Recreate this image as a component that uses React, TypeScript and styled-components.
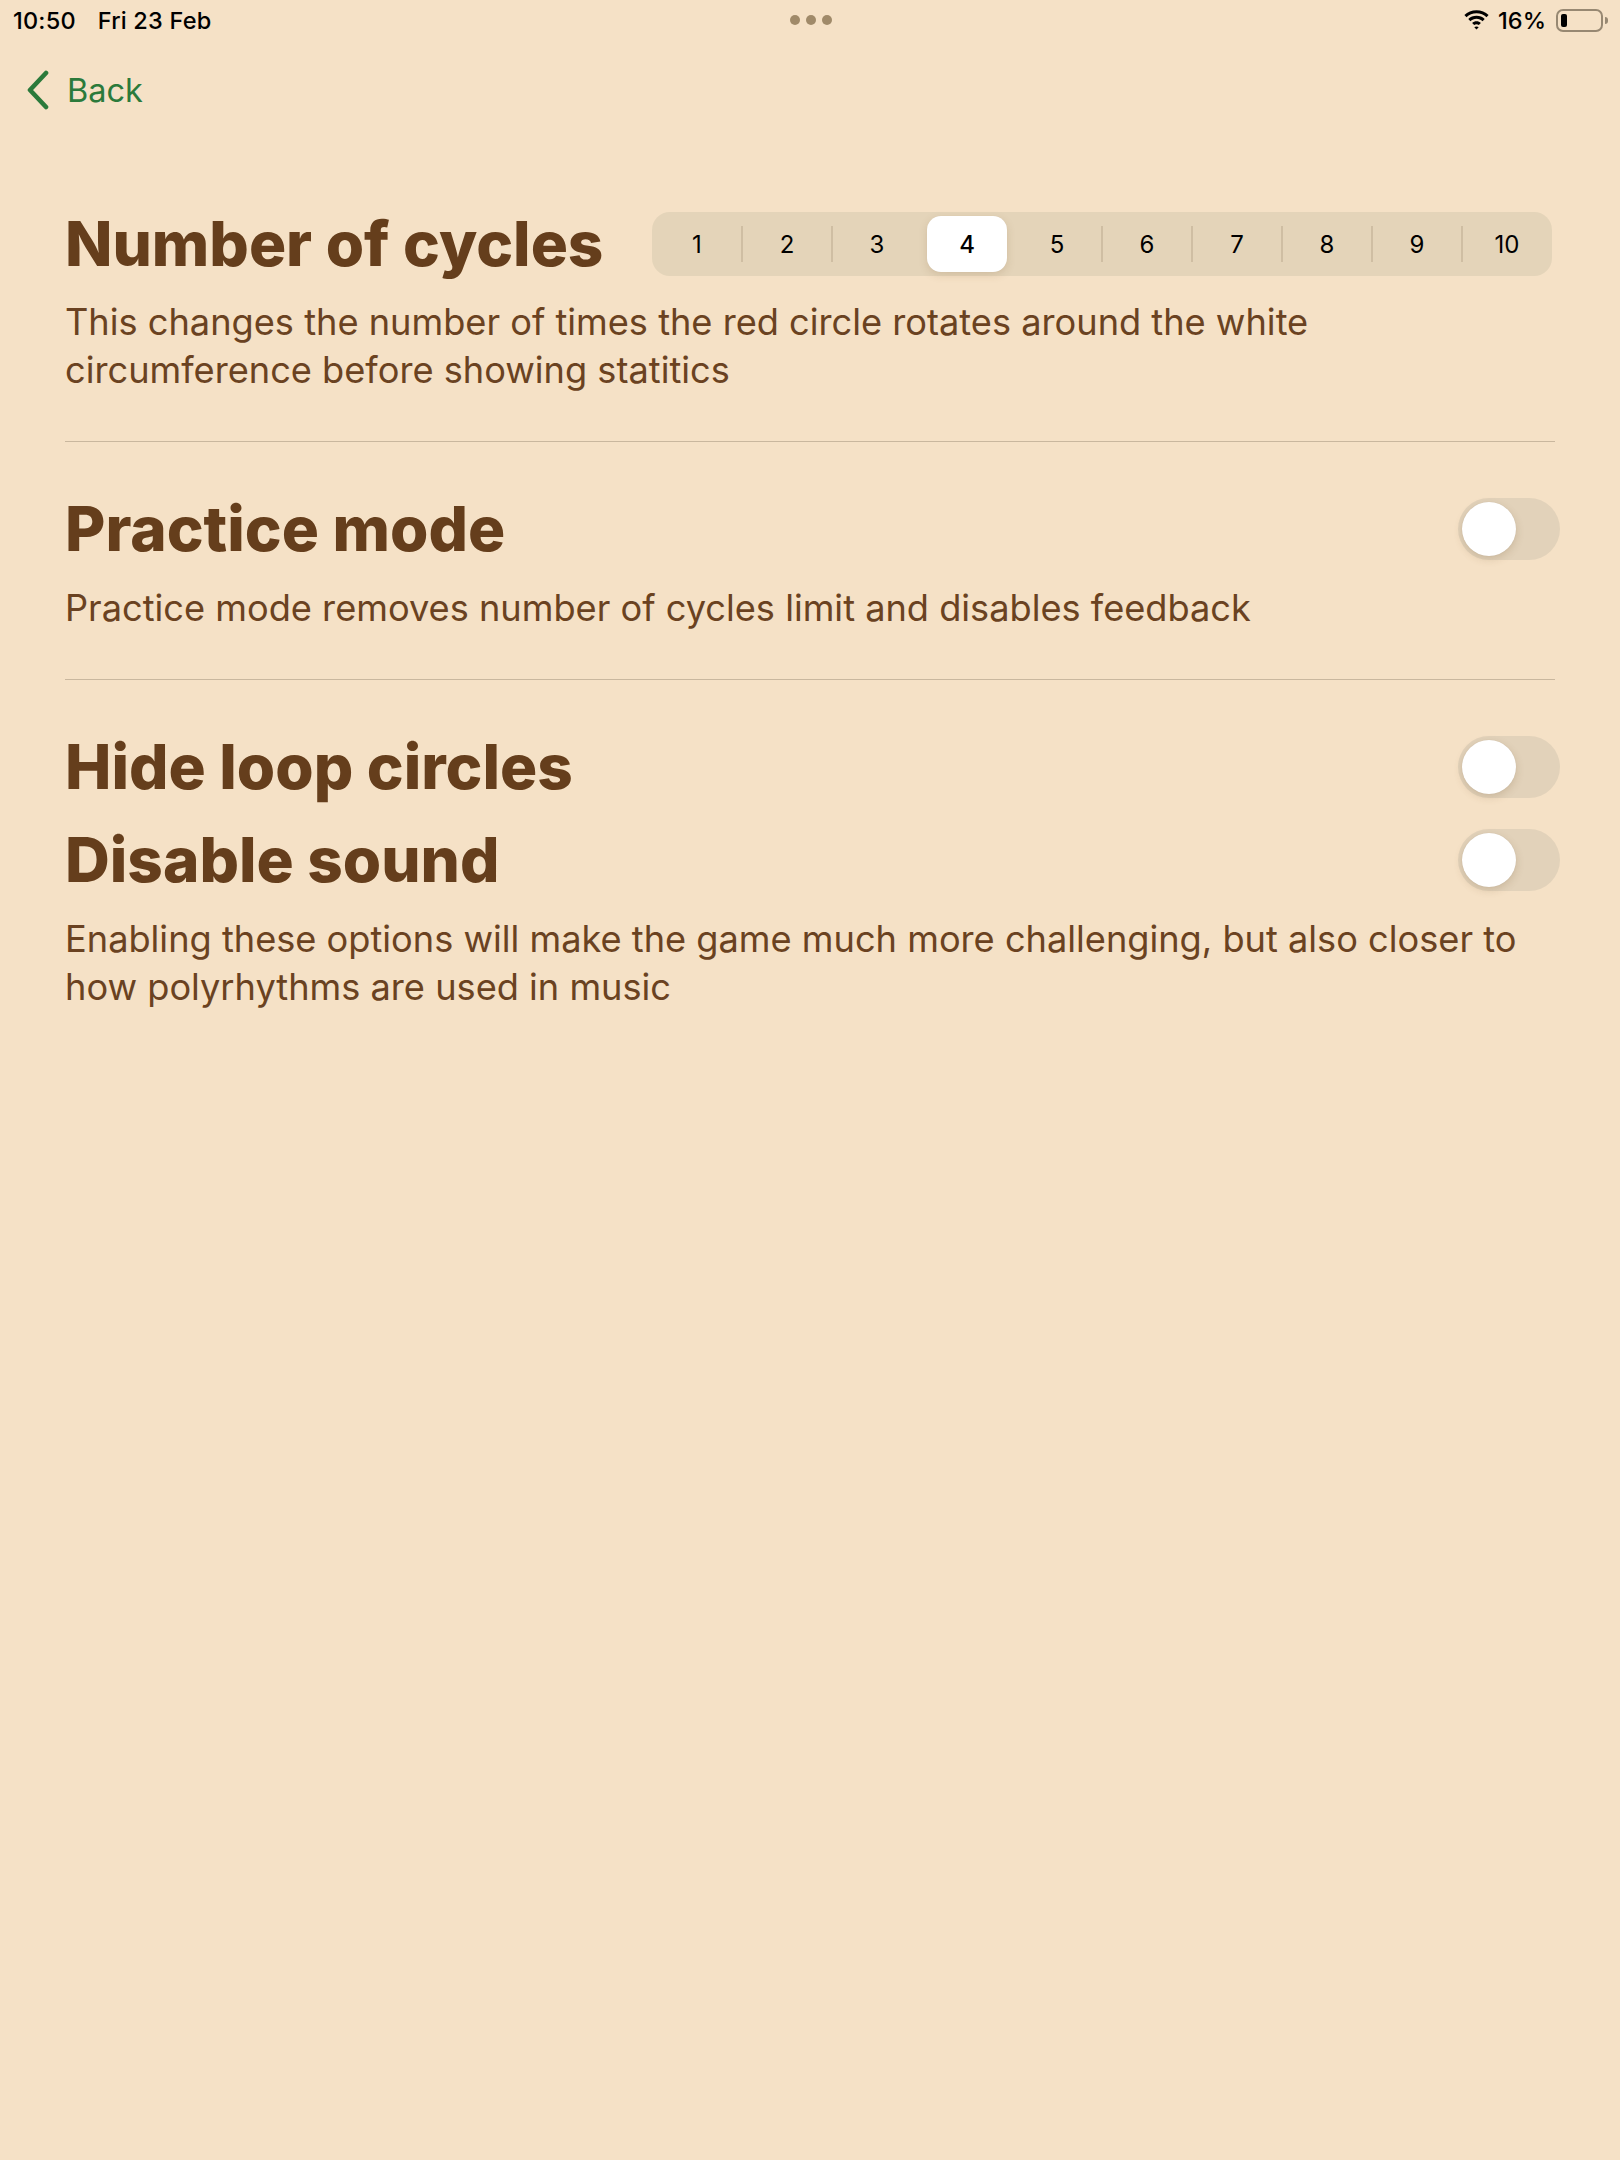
import React, { useState } from "react";
import styled, { createGlobalStyle } from "styled-components";

const Global = createGlobalStyle`
  html, body { margin: 0; padding: 0; background: #F5E1C6; }
  body { font-family: Inter, "Noto Sans", sans-serif; -webkit-font-smoothing: antialiased; }
  #root { min-height: 2160px; background: #F5E1C6; }
`;

const Page = styled.div`
  width: 1620px;
  min-height: 2160px;
  background: #F5E1C6;
  display: flex;
  flex-direction: column;
`;

const StatusBar = styled.div`
  height: 40px;
  display: grid;
  grid-template-columns: 1fr auto 1fr;
  align-items: center;
  padding: 0 11px 0 13px;
  font-size: 23.5px;
  font-weight: 500;
  color: #000;
`;

const StatusLeft = styled.div`
  display: flex;
  gap: 22px;
  letter-spacing: 0.2px;
`;

const Dots = styled.div`
  display: flex;
  gap: 6px;
`;

const Dot = styled.span`
  width: 10px;
  height: 10px;
  border-radius: 50%;
  background: #A08A69;
`;

const StatusRight = styled.div`
  display: flex;
  justify-content: flex-end;
  align-items: center;
  gap: 8px;
`;

const Battery = styled.div`
  position: relative;
  width: 47px;
  height: 23px;
  box-sizing: border-box;
  border: 2px solid #978872;
  border-radius: 7px;
  padding: 3px;
  margin-left: 2px;
  margin-right: 6px;
  &::after {
    content: "";
    position: absolute;
    right: -7px;
    top: 6px;
    width: 3px;
    height: 7px;
    border-radius: 0 3px 3px 0;
    background: #978872;
  }
`;

const BatteryLevel = styled.div`
  height: 100%;
  border-radius: 2px;
  background: #000;
`;

const NavBar = styled.div`
  height: 116px;
  display: flex;
  align-items: flex-start;
  padding: 30px 0 0 26px;
  box-sizing: border-box;
`;

const BackButton = styled.button`
  display: flex;
  align-items: center;
  gap: 17px;
  background: none;
  border: none;
  padding: 0;
  color: #2B7A3B;
  font-family: Inter, sans-serif;
  font-size: 32.5px;
  font-weight: 400;
  cursor: pointer;
`;

const Content = styled.div`
  padding: 0 65px;
`;

const Section = styled.section<{ $last?: boolean }>`
  padding: 56px 0 ${(p) => (p.$last ? "0" : "47px")};
  border-bottom: ${(p) => (p.$last ? "none" : "1px solid #C9B79E")};
  display: flex;
  flex-direction: column;
`;

const Row = styled.div<{ $gapAfter?: number }>`
  display: flex;
  align-items: center;
  justify-content: space-between;
  margin-bottom: ${(p) => p.$gapAfter ?? 0}px;
`;

const Heading = styled.h2`
  margin: 0;
  font-family: Inter, sans-serif;
  font-size: 62px;
  line-height: 62px;
  font-weight: 800;
  letter-spacing: 0;
  color: #653E1C;
`;

const Description = styled.p`
  margin: 0;
  font-family: Inter, sans-serif;
  font-size: 36.2px;
  line-height: 48px;
  font-weight: 400;
  color: #6A4221;
  max-width: 1490px;
`;

const Segmented = styled.div`
  width: 900px;
  height: 64px;
  box-sizing: border-box;
  padding: 4px 0;
  margin-right: 3px;
  border-radius: 18px;
  background: #E4D4B9;
  display: grid;
  grid-template-columns: repeat(10, 1fr);
`;

const Segment = styled.button<{ $selected: boolean; $divider: boolean }>`
  position: relative;
  border: none;
  background: transparent;
  padding: 0;
  font-family: Inter, sans-serif;
  font-size: 24px;
  font-weight: ${(p) => (p.$selected ? 500 : 400)};
  color: #000;
  display: flex;
  align-items: center;
  justify-content: center;
  cursor: pointer;
  &::before {
    content: "";
    position: absolute;
    left: 5px;
    right: 5px;
    top: 0;
    bottom: 0;
    border-radius: 14px;
    background: ${(p) => (p.$selected ? "#fff" : "transparent")};
    box-shadow: ${(p) => (p.$selected ? "0 3px 8px rgba(120, 90, 50, 0.18), 0 0 1px rgba(0,0,0,0.05)" : "none")};
  }
  &::after {
    content: "";
    position: absolute;
    left: -1px;
    top: 10px;
    bottom: 10px;
    width: 2px;
    background: ${(p) => (p.$divider ? "#CFBEA3" : "transparent")};
  }
  span { position: relative; }
`;

const Track = styled.button<{ $on: boolean }>`
  position: relative;
  width: 102px;
  height: 62px;
  border-radius: 31px;
  border: none;
  padding: 0;
  margin-right: -5px;
  background: ${(p) => (p.$on ? "#34C759" : "#E2D2BA")};
  cursor: pointer;
  flex-shrink: 0;
`;

const Knob = styled.span<{ $on: boolean }>`
  position: absolute;
  top: 4px;
  left: ${(p) => (p.$on ? "44px" : "4px")};
  width: 54px;
  height: 54px;
  border-radius: 50%;
  background: #fff;
  box-shadow: 0 3px 8px rgba(110, 80, 40, 0.2), 0 0 1px rgba(0, 0, 0, 0.1);
  transition: left 0.2s;
`;

function Toggle({ on, onChange }: { on: boolean; onChange: (v: boolean) => void }) {
  return (
    <Track $on={on} onClick={() => onChange(!on)}>
      <Knob $on={on} />
    </Track>
  );
}

const Wifi = () => (
  <svg width="27" height="20" viewBox="0 0 27 20">
    <path d="M13.5 3.2c3.9 0 7.4 1.5 10 4l2.1-2.2C22.5 2 18.2 0.2 13.5 0.2S4.5 2 1.4 5l2.1 2.2c2.6-2.5 6.1-4 10-4z" fill="#000" />
    <path d="M13.5 8.8c2.4 0 4.5 0.9 6.1 2.4l2.1-2.2c-2.1-2-5-3.2-8.2-3.2s-6.1 1.2-8.2 3.2l2.1 2.2c1.6-1.5 3.7-2.4 6.1-2.4z" fill="#000" />
    <path d="M13.5 14.2c0.9 0 1.7 0.3 2.3 0.9l2.1-2.2c-1.2-1.1-2.7-1.7-4.4-1.7s-3.2 0.6-4.4 1.7l2.1 2.2c0.6-0.6 1.4-0.9 2.3-0.9z" fill="#000" />
    <path d="M13.5 19.6l2.2-2.3c-0.6-0.5-1.3-0.8-2.2-0.8s-1.6 0.3-2.2 0.8z" fill="#000" />
  </svg>
);

const Chevron = () => (
  <svg width="24" height="40" viewBox="0 0 24 40">
    <path d="M20 3 L4 20 L20 37" fill="none" stroke="#2B7A3B" strokeWidth="4.6" strokeLinecap="round" strokeLinejoin="round" />
  </svg>
);

export default function App() {
  const [cycles, setCycles] = useState(4);
  const [practice, setPractice] = useState(false);
  const [hideLoops, setHideLoops] = useState(false);
  const [noSound, setNoSound] = useState(false);

  return (
    <Page>
      <Global />
      <StatusBar>
        <StatusLeft>
          <span>10:50</span>
          <span>Fri 23 Feb</span>
        </StatusLeft>
        <Dots>
          <Dot />
          <Dot />
          <Dot />
        </Dots>
        <StatusRight>
          <Wifi />
          <span>16%</span>
          <Battery>
            <BatteryLevel style={{ width: "16%" }} />
          </Battery>
        </StatusRight>
      </StatusBar>
      <NavBar>
        <BackButton>
          <Chevron />
          Back
        </BackButton>
      </NavBar>
      <Content>
        <Section>
          <Row $gapAfter={22}>
            <Heading>Number of cycles</Heading>
            <Segmented>
              {Array.from({ length: 10 }, (_, i) => i + 1).map((n) => (
                <Segment
                  key={n}
                  $selected={n === cycles}
                  $divider={n > 1 && n !== cycles && n - 1 !== cycles}
                  onClick={() => setCycles(n)}
                >
                  <span>{n}</span>
                </Segment>
              ))}
            </Segmented>
          </Row>
          <Description>
            This changes the number of times the red circle rotates around the white circumference before showing statitics
          </Description>
        </Section>
        <Section>
          <Row $gapAfter={24}>
            <Heading>Practice mode</Heading>
            <Toggle on={practice} onChange={setPractice} />
          </Row>
          <Description>Practice mode removes number of cycles limit and disables feedback</Description>
        </Section>
        <Section $last>
          <Row $gapAfter={31}>
            <Heading>Hide loop circles</Heading>
            <Toggle on={hideLoops} onChange={setHideLoops} />
          </Row>
          <Row $gapAfter={24}>
            <Heading>Disable sound</Heading>
            <Toggle on={noSound} onChange={setNoSound} />
          </Row>
          <Description>
            Enabling these options will make the game much more challenging, but also closer to how polyrhythms are used in music
          </Description>
        </Section>
      </Content>
    </Page>
  );
}
